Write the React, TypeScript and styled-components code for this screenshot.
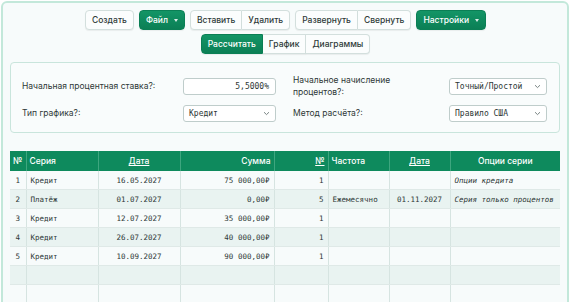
import * as React from 'react';
import styled, { createGlobalStyle } from 'styled-components';

const GlobalStyle = createGlobalStyle`
  html, body {
    margin: 0;
    padding: 0;
    background: #ffffff;
    overflow: hidden;
  }
  body {
    font-family: Inter, "Noto Sans", sans-serif;
  }
`;

type Row = {
  n: number;
  series: string;
  date: string;
  sum: string;
  count: number;
  freq: string;
  date2: string;
  options: string;
};

const rows: Row[] = [
  { n: 1, series: 'Кредит', date: '16.05.2027', sum: '75 000,00₽', count: 1, freq: '', date2: '', options: 'Опции кредита' },
  { n: 2, series: 'Платёж', date: '01.07.2027', sum: '0,00₽', count: 5, freq: 'Ежемесячно', date2: '01.11.2027', options: 'Серия только процентов' },
  { n: 3, series: 'Кредит', date: '12.07.2027', sum: '35 000,00₽', count: 1, freq: '', date2: '', options: '' },
  { n: 4, series: 'Кредит', date: '26.07.2027', sum: '40 000,00₽', count: 1, freq: '', date2: '', options: '' },
  { n: 5, series: 'Кредит', date: '10.09.2027', sum: '90 000,00₽', count: 1, freq: '', date2: '', options: '' },
];

const Chevron = () => (
  <svg width="7" height="5" viewBox="0 0 7 5">
    <path d="M1 1.2 L3.5 3.6 L6 1.2" fill="none" stroke="#6b7775" strokeWidth="0.9" />
  </svg>
);

export default function App() {
  const emptyRows = [0, 1, 2];
  return (
    <Frame>
      <GlobalStyle />
      <Toolbar>
        <Button>Создать</Button>
        <Button primary>
          Файл <Caret />
        </Button>
        <Group>
          <Button>Вставить</Button>
          <Button>Удалить</Button>
        </Group>
        <Group>
          <Button>Развернуть</Button>
          <Button>Свернуть</Button>
        </Group>
        <Button primary>
          Настройки <Caret />
        </Button>
      </Toolbar>
      <Toolbar>
        <Group>
          <Button primary>Рассчитать</Button>
          <Button>График</Button>
          <Button>Диаграммы</Button>
        </Group>
      </Toolbar>

      <Panel>
        <Field>
          <Label>Начальная процентная ставка?:</Label>
          <TextInput>5,5000%</TextInput>
        </Field>
        <Field>
          <Label>
            Начальное начисление
            <br />
            процентов?:
          </Label>
          <Select wide>
            <span>Точный/Простой</span>
            <Chevron />
          </Select>
        </Field>
        <Field>
          <Label>Тип графика?:</Label>
          <Select>
            <span>Кредит</span>
            <Chevron />
          </Select>
        </Field>
        <Field>
          <Label>Метод расчёта?:</Label>
          <Select wide>
            <span>Правило США</span>
            <Chevron />
          </Select>
        </Field>
      </Panel>

      <Table>
        <colgroup>
          <col style={{ width: 16 }} />
          <col style={{ width: 72 }} />
          <col style={{ width: 82 }} />
          <col style={{ width: 94 }} />
          <col style={{ width: 54 }} />
          <col style={{ width: 61 }} />
          <col style={{ width: 61 }} />
          <col />
        </colgroup>
        <thead>
          <tr>
            <Th>№</Th>
            <Th>Серия</Th>
            <Th align="center" link>Дата</Th>
            <Th align="right">Сумма</Th>
            <Th align="right" link>№</Th>
            <Th>Частота</Th>
            <Th align="center" link>Дата</Th>
            <Th align="center">Опции серии</Th>
          </tr>
        </thead>
        <tbody>
          {rows.map((r) => (
            <Tr key={r.n}>
              <Td align="center">{r.n}</Td>
              <Td>{r.series}</Td>
              <Td align="center">{r.date}</Td>
              <Td align="right">{r.sum}</Td>
              <Td align="right">{r.count}</Td>
              <Td>{r.freq}</Td>
              <Td align="center">{r.date2}</Td>
              <Td italic>{r.options}</Td>
            </Tr>
          ))}
          {emptyRows.map((i) => (
            <Tr key={`e-${i}`}>
              {Array.from({ length: 8 }).map((_, j) => (
                <Td key={j} />
              ))}
            </Tr>
          ))}
        </tbody>
      </Table>
    </Frame>
  );
}

const Frame = styled.div`
  margin: 1px 1px 0 1px;
  min-height: 330px;
  border: 2px solid #c3e8da;
  border-radius: 6px;
  background: #f7fbfb;
  padding: 7px 6px 0 7px;
  box-sizing: border-box;
`;

const Toolbar = styled.div`
  display: flex;
  justify-content: center;
  gap: 5px;
  margin-bottom: 4px;
`;

const Group = styled.div`
  display: flex;

  & > button {
    border-radius: 0;
  }
  & > button + button {
    border-left: none;
  }
  & > button:first-child {
    border-radius: 4px 0 0 4px;
  }
  & > button:last-child {
    border-radius: 0 4px 4px 0;
  }
`;

const Button = styled.button<{ primary?: boolean }>`
  height: 20px;
  padding: 0 6px;
  font-family: Inter, "Noto Sans", sans-serif;
  font-size: 8.5px;
  font-weight: 500;
  border-radius: 4px;
  display: flex;
  align-items: center;
  gap: 6px;
  cursor: pointer;
  color: ${(p) => (p.primary ? '#ffffff' : '#2f3b39')};
  background: ${(p) => (p.primary ? 'linear-gradient(#139566, #0b7f55)' : '#fbfdfd')};
  border: 1px solid ${(p) => (p.primary ? '#0b7f55' : '#d3dfdd')};
  box-shadow: 0 1px 1px rgba(0, 0, 0, 0.06);
`;

const Caret = styled.span`
  width: 0;
  height: 0;
  border-left: 2.5px solid transparent;
  border-right: 2.5px solid transparent;
  border-top: 3px solid rgba(255, 255, 255, 0.85);
`;

const Panel = styled.div`
  margin-top: 8px;
  width: 550px;
  box-sizing: border-box;
  border: 1px solid #c9e5dc;
  border-radius: 4px;
  background: #f9fcfc;
  padding: 14px 12px 10px 11px;
  display: grid;
  grid-template-columns: 1fr 1fr;
  column-gap: 17px;
  row-gap: 9px;
`;

const Field = styled.div`
  display: flex;
  align-items: center;
  justify-content: space-between;
  height: 18px;
`;

const Label = styled.div`
  font-size: 8.5px;
  color: #2e3836;
  line-height: 12.5px;
`;

const TextInput = styled.div`
  width: 93px;
  height: 17px;
  box-sizing: border-box;
  border: 1px solid #bfcdcb;
  border-radius: 3px;
  background: #fff;
  font-family: "DejaVu Sans Mono", monospace;
  font-size: 8px;
  color: #2e3836;
  text-align: right;
  line-height: 15px;
  padding-right: 6px;
`;

const Select = styled.div<{ wide?: boolean }>`
  width: ${(p) => (p.wide ? '98px' : '93px')};
  height: 17px;
  box-sizing: border-box;
  border: 1px solid #bfcdcb;
  border-radius: 3px;
  background: #fff;
  font-family: "DejaVu Sans Mono", monospace;
  font-size: 8px;
  color: #2e3836;
  display: flex;
  align-items: center;
  justify-content: space-between;
  padding: 0 5px;
`;

const Table = styled.table`
  margin-top: 18px;
  width: 550px;
  border-collapse: collapse;
  table-layout: fixed;
`;

const Th = styled.th<{ align?: string; link?: boolean }>`
  height: 20px;
  padding: 0 3px;
  background: #0e8a5d;
  color: #fff;
  font-family: Inter, "Noto Sans", sans-serif;
  font-size: 8.5px;
  font-weight: 500;
  text-align: ${(p) => p.align || 'left'};
  text-decoration: ${(p) => (p.link ? 'underline' : 'none')};
  border-left: 1px solid #3ea67f;
  &:first-child {
    border-left: none;
  }
`;

const Tr = styled.tr`
  background: #f7fbfb;
  &:nth-child(even) {
    background: #e9f3f1;
  }
`;

const Td = styled.td<{ align?: string; italic?: boolean }>`
  height: 18px;
  padding: 0 4px;
  font-family: "DejaVu Sans Mono", monospace;
  font-size: 7.5px;
  color: #2e3836;
  white-space: nowrap;
  overflow: hidden;
  text-align: ${(p) => p.align || 'left'};
  font-style: ${(p) => (p.italic ? 'italic' : 'normal')};
  border-left: 1px solid #d6e4e1;
  border-bottom: 1px solid #dfe9e7;
  &:first-child {
    border-left: none;
  }
`;
